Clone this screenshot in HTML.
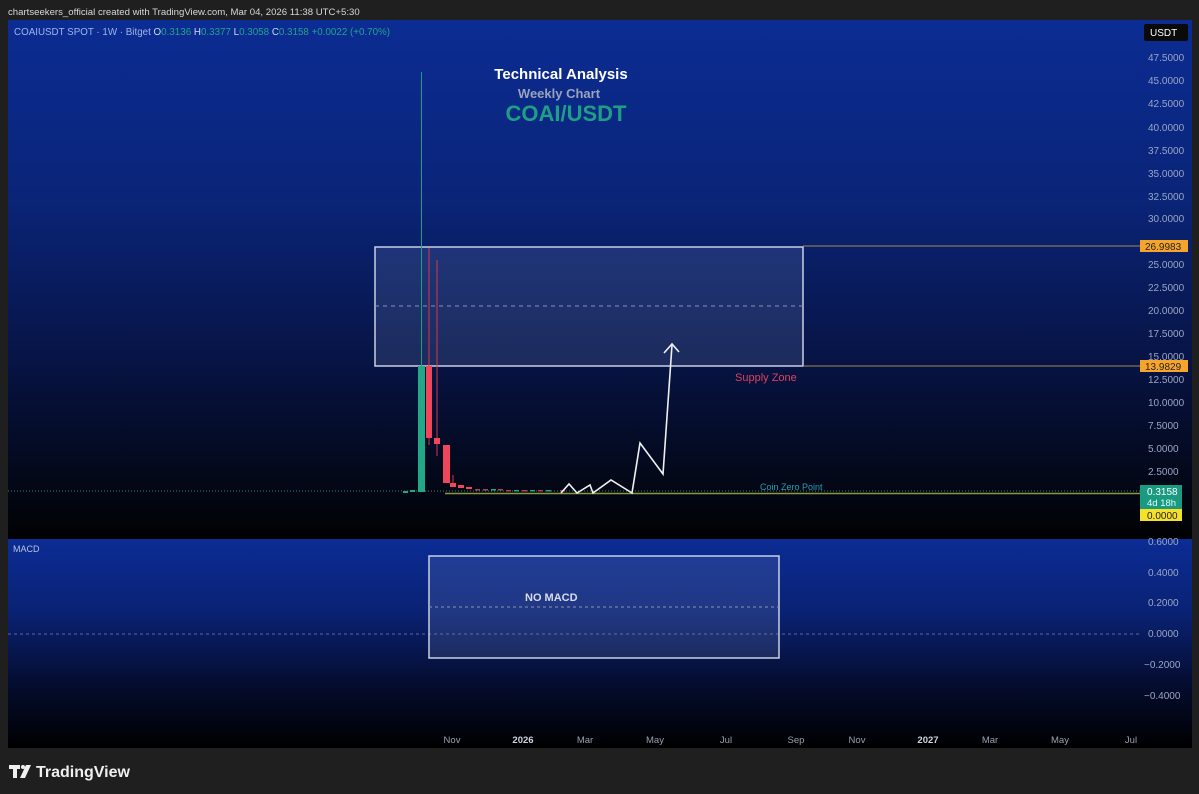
<!DOCTYPE html>
<html><head><meta charset="utf-8"><style>
html,body{margin:0;padding:0;background:#1f1f1f;width:1199px;height:794px;overflow:hidden}
svg{display:block;font-family:"Liberation Sans",sans-serif}
</style></head><body>
<svg width="1199" height="794" viewBox="0 0 1199 794">
<defs>
<linearGradient id="g1" x1="0" y1="0" x2="0" y2="1">
<stop offset="0" stop-color="#0b2c93"/><stop offset="0.35" stop-color="#0a2477"/><stop offset="0.65" stop-color="#071446"/><stop offset="0.9" stop-color="#030716"/><stop offset="1" stop-color="#010204"/>
</linearGradient>
<linearGradient id="g2" x1="0" y1="0" x2="0" y2="1">
<stop offset="0" stop-color="#0b2c95"/><stop offset="0.35" stop-color="#0a2274"/><stop offset="0.7" stop-color="#040c2e"/><stop offset="1" stop-color="#000"/>
</linearGradient>
</defs>
<rect width="1199" height="794" fill="#1f1f1f"/>
<text x="8" y="15" fill="#d8d8d8" font-size="9.6">chartseekers_official created with TradingView.com, Mar 04, 2026 11:38 UTC+5:30</text>
<rect x="8" y="20" width="1184" height="517" fill="url(#g1)"/>
<rect x="8" y="537" width="1184" height="2" fill="#000"/>
<rect x="8" y="539" width="1184" height="209" fill="url(#g2)"/>
<text x="14" y="35" font-size="9.8" fill="#9fb5e8">COAIUSDT SPOT · 1W · Bitget <tspan fill="#cfd8f0">O</tspan><tspan fill="#23a38a">0.3136</tspan> <tspan fill="#cfd8f0">H</tspan><tspan fill="#23a38a">0.3377</tspan> <tspan fill="#cfd8f0">L</tspan><tspan fill="#23a38a">0.3058</tspan> <tspan fill="#cfd8f0">C</tspan><tspan fill="#23a38a">0.3158 +0.0022 (+0.70%)</tspan></text>
<rect x="1144" y="24" width="44" height="17" rx="2" fill="#0a0a0a"/>
<text x="1150" y="36" font-size="10" fill="#fff">USDT</text>
<g font-size="10" fill="#9aa6c4">
<text x="1148" y="61">47.5000</text><text x="1148" y="84">45.0000</text><text x="1148" y="107">42.5000</text><text x="1148" y="131">40.0000</text><text x="1148" y="154">37.5000</text><text x="1148" y="177">35.0000</text><text x="1148" y="200">32.5000</text><text x="1148" y="222">30.0000</text><text x="1148" y="268">25.0000</text><text x="1148" y="291">22.5000</text><text x="1148" y="314">20.0000</text><text x="1148" y="337">17.5000</text><text x="1148" y="360">15.0000</text><text x="1148" y="383">12.5000</text><text x="1148" y="406">10.0000</text><text x="1148" y="429">7.5000</text><text x="1148" y="452">5.0000</text><text x="1148" y="475">2.5000</text>
<text x="1148" y="545">0.6000</text><text x="1148" y="576">0.4000</text><text x="1148" y="606">0.2000</text><text x="1148" y="637">0.0000</text><text x="1144" y="668">−0.2000</text><text x="1144" y="699">−0.4000</text>
</g>
<text x="561" y="79" text-anchor="middle" font-size="15" font-weight="bold" fill="#fff">Technical Analysis</text>
<text x="559" y="98" text-anchor="middle" font-size="13" font-weight="bold" fill="#9aa3b8">Weekly Chart</text>
<text x="566" y="121" text-anchor="middle" font-size="22" font-weight="bold" fill="#1f9e86">COAI/USDT</text>
<rect x="375" y="247" width="428" height="119" fill="rgba(120,140,190,0.2)" stroke="#c8d0e4" stroke-width="1.5"/>
<line x1="375" y1="306" x2="803" y2="306" stroke="#8a94b0" stroke-dasharray="4,4"/>
<line x1="803" y1="246" x2="1140" y2="246" stroke="#a88a55"/>
<line x1="803" y1="366" x2="1140" y2="366" stroke="#a88a55"/>
<text x="735" y="381" font-size="11" fill="#e0405e">Supply Zone</text>
<line x1="8" y1="491" x2="1140" y2="491" stroke="#3a8a6a" stroke-dasharray="1,2"/>
<line x1="445" y1="493.5" x2="1140" y2="493.5" stroke="#8a9a40" stroke-width="1.5"/>
<text x="760" y="490" font-size="9" fill="#1fa0b8">Coin Zero Point</text>
<line x1="421.5" y1="72" x2="421.5" y2="492" stroke="#1f9e86"/>
<rect x="418" y="366" width="7" height="126" fill="#22a887"/>
<line x1="429" y1="248" x2="429" y2="445" stroke="#d03850"/>
<rect x="426" y="366" width="6" height="72" fill="#f0455a"/>
<line x1="437" y1="260" x2="437" y2="456" stroke="#d03850"/>
<rect x="434" y="438" width="6" height="6" fill="#f0455a"/>
<rect x="443" y="445" width="7" height="38" fill="#f0455a"/>
<line x1="453" y1="475" x2="453" y2="487" stroke="#d03850"/>
<rect x="450" y="483" width="6" height="4" fill="#f0455a"/>
<rect x="458" y="485" width="6" height="3" fill="#f0455a"/>
<rect x="466" y="487" width="6" height="2" fill="#f0455a"/>
<rect x="403" y="491" width="5" height="2" fill="#22a887"/><rect x="410" y="490" width="5" height="2" fill="#22a887"/>
<g fill="#b0405a"><rect x="475" y="489" width="5" height="1.5"/><rect x="483" y="489" width="5" height="1.5"/><rect x="498" y="489" width="5" height="1.5"/><rect x="506" y="490" width="5" height="1.5"/><rect x="522" y="490" width="5" height="1.5"/><rect x="538" y="490" width="5" height="1.5"/><rect x="560" y="490" width="5" height="1.5"/></g>
<g fill="#22a887"><rect x="491" y="489" width="5" height="1.5"/><rect x="514" y="490" width="5" height="1.5"/><rect x="530" y="490" width="5" height="1.5"/><rect x="546" y="490" width="5" height="1.5"/></g>
<polyline points="561,493 569,484 577,493 590,485 593,493 611,480 632,493 640,443 663,474 672,345" fill="none" stroke="#f0f0f0" stroke-width="1.6"/>
<polyline points="664,353 672,344 679,352" fill="none" stroke="#f0f0f0" stroke-width="1.6"/>
<rect x="1140" y="240" width="48" height="12" fill="#f7a52a"/><text x="1145" y="250" font-size="10" fill="#222">26.9983</text>
<rect x="1140" y="360" width="48" height="12" fill="#f7a52a"/><text x="1145" y="370" font-size="10" fill="#222">13.9829</text>
<rect x="1140" y="485" width="42" height="24" fill="#1a9a80"/><text x="1147" y="495" font-size="10" fill="#fff">0.3158</text><text x="1147" y="506" font-size="9.5" fill="#dff">4d 18h</text>
<rect x="1140" y="509" width="42" height="12" fill="#f5e12a"/><text x="1147" y="519" font-size="10" fill="#222">0.0000</text>
<text x="13" y="552" font-size="9" fill="#b8c2dc">MACD</text>
<line x1="8" y1="634" x2="1140" y2="634" stroke="#5a6a9a" stroke-dasharray="3,3"/>
<rect x="429" y="556" width="350" height="102" fill="rgba(120,140,190,0.2)" stroke="#c8d0e4" stroke-width="1.5"/>
<line x1="429" y1="607" x2="779" y2="607" stroke="#8a94b0" stroke-dasharray="3,3"/>
<text x="525" y="601" font-size="11" font-weight="bold" fill="#d8dce8">NO MACD</text>
<g font-size="9.5" fill="#9aa0b0" text-anchor="middle">
<text x="452" y="743">Nov</text><text x="523" y="743" fill="#d0d4e0" font-weight="bold">2026</text><text x="585" y="743">Mar</text><text x="655" y="743">May</text><text x="726" y="743">Jul</text><text x="796" y="743">Sep</text><text x="857" y="743">Nov</text><text x="928" y="743" fill="#d0d4e0" font-weight="bold">2027</text><text x="990" y="743">Mar</text><text x="1060" y="743">May</text><text x="1131" y="743">Jul</text>
</g>
<g fill="#f0f0f0">
<rect x="9" y="765" width="11" height="4"/><rect x="13" y="765" width="4" height="13"/>
<circle cx="23" cy="767" r="2"/><polygon points="26,765 31,765 25,778 20,778"/>
</g>
<text x="36" y="777" font-size="16" font-weight="bold" fill="#f0f0f0">TradingView</text>
</svg>
</body></html>
